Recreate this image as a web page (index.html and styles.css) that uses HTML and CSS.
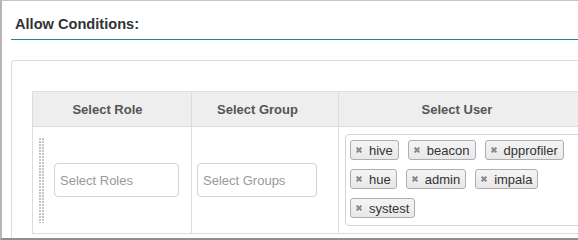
FILE: index.html
```html
<!DOCTYPE html>
<html>
<head>
<meta charset="utf-8">
<link rel="stylesheet" href="styles.css">
</head>
<body>
<div class="frame">
  <div class="section-title">Allow Conditions:</div>
  <div class="card">
    <div class="cond-table">
      <div class="th th-role">Select Role</div>
      <div class="th th-group">Select Group</div>
      <div class="th th-user">Select User</div>
      <div class="td td-role">
        <span class="drag"></span>
        <div class="input input-role">Select Roles</div>
      </div>
      <div class="td td-group">
        <div class="input input-group">Select Groups</div>
      </div>
      <div class="td td-user">
        <div class="tagbox">
          <span class="tag"><svg viewBox="0 0 6 6"><path d="M0.6 0.6L5.4 5.4M5.4 0.6L0.6 5.4"/></svg>hive</span>
          <span class="tag"><svg viewBox="0 0 6 6"><path d="M0.6 0.6L5.4 5.4M5.4 0.6L0.6 5.4"/></svg>beacon</span>
          <span class="tag"><svg viewBox="0 0 6 6"><path d="M0.6 0.6L5.4 5.4M5.4 0.6L0.6 5.4"/></svg>dpprofiler</span>
          <span class="tag"><svg viewBox="0 0 6 6"><path d="M0.6 0.6L5.4 5.4M5.4 0.6L0.6 5.4"/></svg>hue</span>
          <span class="tag"><svg viewBox="0 0 6 6"><path d="M0.6 0.6L5.4 5.4M5.4 0.6L0.6 5.4"/></svg>admin</span>
          <span class="tag"><svg viewBox="0 0 6 6"><path d="M0.6 0.6L5.4 5.4M5.4 0.6L0.6 5.4"/></svg>impala</span>
          <span class="tag"><svg viewBox="0 0 6 6"><path d="M0.6 0.6L5.4 5.4M5.4 0.6L0.6 5.4"/></svg>systest</span>
        </div>
      </div>
    </div>
  </div>
</div>
</body>
</html>
```

FILE: styles.css
```css
html, body {
  margin: 0;
  padding: 0;
}
body {
  width: 578px;
  height: 240px;
  overflow: hidden;
  background: #fff;
  font-family: "Liberation Sans", Arial, Helvetica, sans-serif;
}
*, *::before, *::after {
  box-sizing: border-box;
}
.frame {
  width: 578px;
  height: 240px;
  border-top: 1px solid #c4c4c4;
  border-left: 2px solid #b5b5b5;
  border-bottom: 2px solid #8e8e8e;
  padding-left: 9px;
  overflow: hidden;
}
.section-title {
  font-weight: bold;
  font-size: 14.6px;
  line-height: 18px;
  color: #333;
  padding: 14px 0 6px 4px;
  border-bottom: 1px solid #2b7f95;
}
.card {
  margin-top: 20px;
  border: 1px solid #dcdcdc;
  border-right: 0;
  border-radius: 4px 0 0 4px;
  padding: 30px 0 0 20px;
  height: 300px;
  overflow: hidden;
}
.cond-table {
  display: grid;
  grid-template-columns: 159px 147px 248px;
  border: 1px solid #dddddd;
  width: max-content;
}
.th {
  background: #eeeeee;
  height: 35px;
  border-bottom: 1px solid #dddddd;
  font-weight: bold;
  font-size: 13px;
  color: #555;
  display: flex;
  align-items: center;
  justify-content: center;
}
.th-role {
  border-right: 1px solid #dddddd;
  padding-right: 9px;
}
.th-group {
  border-right: 1px solid #dddddd;
  padding-right: 15px;
}
.th-user {
  padding-right: 12px;
}
.td {
  height: 106px;
}
.td-role {
  border-right: 1px solid #dddddd;
  display: flex;
  align-items: center;
  padding-left: 6px;
}
.td-group {
  border-right: 1px solid #dddddd;
  display: flex;
  align-items: center;
  padding-left: 5px;
}
.drag {
  width: 5px;
  height: 85px;
  margin-right: 10px;
  background:
    linear-gradient(90deg, transparent 2px, #fff 2px) 0 0 / 3px 3px,
    linear-gradient(#c4c4c4 2px, #fff 2px) 0 0 / 3px 3px;
}
.input {
  height: 34px;
  border: 1px solid #c8d3da;
  border-radius: 4px;
  padding-left: 5px;
  font-size: 13px;
  color: #999;
  display: flex;
  align-items: center;
}
.input-role {
  width: 125px;
}
.input-group {
  width: 120px;
}
.td-user {
  padding: 7px 0 0 6px;
}
.tagbox {
  width: 240px;
  border: 1px solid #ccd6dc;
  border-radius: 4px;
  padding: 5px 4px 7px 4px;
  display: flex;
  flex-wrap: wrap;
  gap: 9px;
}
.tag {
  display: inline-flex;
  align-items: center;
  height: 20px;
  border: 1px solid #aeaeae;
  border-radius: 3px;
  background: linear-gradient(#f4f4f4, #e8e8e8);
  padding: 0 5px;
  font-size: 13px;
  color: #333;
  white-space: nowrap;
}
.tag svg {
  width: 6px;
  height: 6px;
  margin-right: 7px;
  flex: none;
}
.tag svg path {
  stroke: #8a8a8a;
  stroke-width: 2;
  fill: none;
}
```
